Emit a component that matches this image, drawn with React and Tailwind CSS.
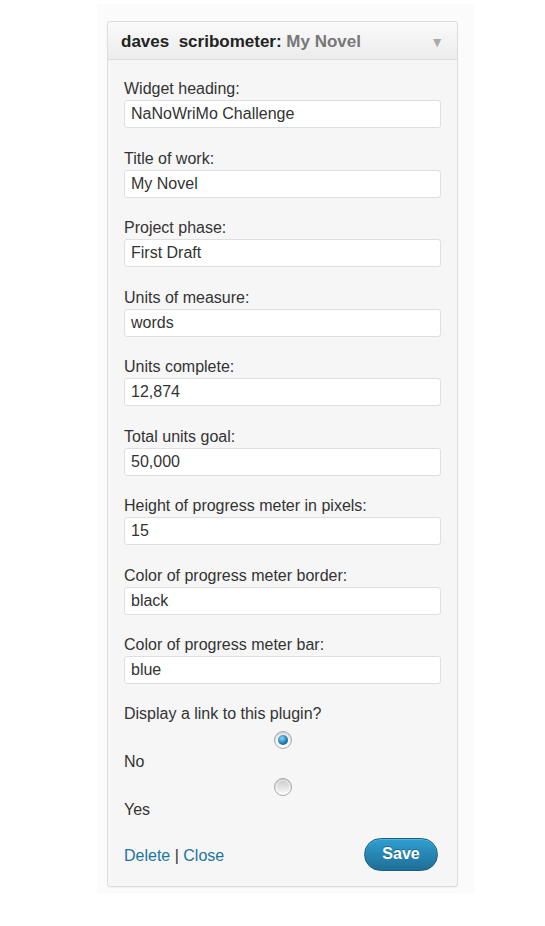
import React, { useState } from 'react';

const fields = [
  { label: 'Widget heading:', value: 'NaNoWriMo Challenge' },
  { label: 'Title of work:', value: 'My Novel' },
  { label: 'Project phase:', value: 'First Draft' },
  { label: 'Units of measure:', value: 'words' },
  { label: 'Units complete:', value: '12,874' },
  { label: 'Total units goal:', value: '50,000' },
  { label: 'Height of progress meter in pixels:', value: '15' },
  { label: 'Color of progress meter border:', value: 'black' },
  { label: 'Color of progress meter bar:', value: 'blue' },
];

const Radio = ({ checked, onClick }) => (
  <button
    type="button"
    onClick={onClick}
    className="w-[18px] h-[18px] rounded-full border border-[#a8a8a8] bg-gradient-to-b from-[#e8e8e8] to-[#ffffff] flex items-center justify-center shadow-[inset_0_1px_2px_rgba(0,0,0,0.15)]"
  >
    {checked ? (
      <span className="w-[10px] h-[10px] rounded-full bg-[radial-gradient(circle_at_40%_35%,#8fd6f7,#1f7fb5_55%,#0b3d5f)]" />
    ) : (
      <span className="w-[12px] h-[12px] rounded-full bg-gradient-to-b from-[#cfcfcf] to-[#f4f4f4]" />
    )}
  </button>
);

const App = () => {
  const [showLink, setShowLink] = useState('no');

  return (
    <div className="min-h-screen bg-white font-['Liberation_Sans',Arial,sans-serif] text-[#333]">
      <div className="ml-[97px] mt-[4px] w-[377px] h-[889px] bg-[#fbfbfb] pt-[17px] pl-[10px]">
        <div className="w-[351px] border border-[#dcdcdc] rounded-[3px] bg-[#f6f6f6] shadow-[0_1px_1px_rgba(0,0,0,0.04)]">
          {/* header */}
          <div className="h-[38px] flex items-center justify-between pt-[3px] pl-[13px] pr-[13px] border-b border-[#dcdcdc] bg-gradient-to-b from-[#fafafa] to-[#ececec] rounded-t-[3px]">
            <h3 className="text-[17px] font-bold text-[#222] whitespace-pre">
              daves  scribometer: <span className="text-[#777]">My Novel</span>
            </h3>
            <span className="text-[14px] text-[#aaa]">▼</span>
          </div>

          {/* form body */}
          <div className="pl-[16px] pr-[17px] pt-[18px] pb-[15px]">
            {fields.map((f) => (
              <div key={f.label} className="mb-[19.5px]">
                <label className="block text-[16px] leading-[22px] text-[#333]">{f.label}</label>
                <input
                  type="text"
                  defaultValue={f.value}
                  className="block w-[317px] h-[28px] px-[6px] text-[16px] text-[#333] bg-white border border-[#dfdfdf] rounded-[3px] outline-none"
                />
              </div>
            ))}

            <p className="text-[16px] leading-[20px] mt-[2px]">Display a link to this plugin?</p>
            <div className="flex justify-center mt-[7px] pl-[1px]">
              <Radio checked={showLink === 'no'} onClick={() => setShowLink('no')} />
            </div>
            <p className="text-[16px] leading-[20px] mt-[3px]">No</p>
            <div className="flex justify-center mt-[6px] pl-[1px]">
              <Radio checked={showLink === 'yes'} onClick={() => setShowLink('yes')} />
            </div>
            <p className="text-[16px] leading-[20px] mt-[4px]">Yes</p>

            <div className="flex items-center justify-between mt-[18px]">
              <div className="text-[16px] pt-[4px]">
                <a href="#" className="text-[#21759b]">Delete</a>
                <span className="text-[#333]"> | </span>
                <a href="#" className="text-[#21759b]">Close</a>
              </div>
              <button
                type="submit"
                className="mr-[2px] w-[74px] h-[33px] rounded-full border border-[#1b5e80] bg-gradient-to-b from-[#2e9fd2] to-[#1f6f96] text-white text-[16px] font-bold [text-shadow:0_-1px_0_rgba(0,0,0,0.3)] shadow-[inset_0_1px_0_rgba(120,200,230,0.5)]"
              >
                Save
              </button>
            </div>
          </div>
        </div>
      </div>
    </div>
  );
};

export default App;
